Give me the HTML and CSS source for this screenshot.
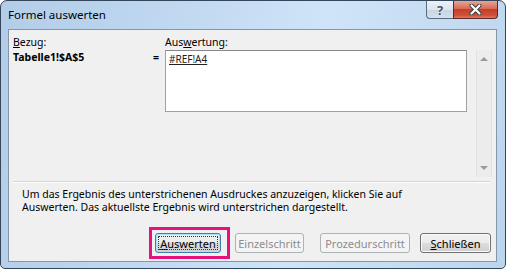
FILE: index.html
```html
<!DOCTYPE html>
<html lang="de">

<head>
    <meta charset="UTF-8">
    <title>Formel auswerten</title>
    <link rel="stylesheet" href="styles.css">
</head>

<body>

    <div class="window">
        <div class="titlebar">
            <span class="title">Formel auswerten</span>
            <div class="caption-buttons">
                <span class="cap-btn help">?</span>
                <span class="cap-btn close">
                    <svg width="13" height="11" viewBox="0 0 13 11">
                        <path d="M2.5 1.5 L10.5 9.5 M10.5 1.5 L2.5 9.5" stroke="#3b3b3b" stroke-width="4" stroke-linecap="round" />
                        <path d="M2.5 1.5 L10.5 9.5 M10.5 1.5 L2.5 9.5" stroke="#ffffff" stroke-width="2.2" stroke-linecap="round" />
                    </svg>
                </span>
            </div>
        </div>

        <div class="client">
            <!-- Bezug und Auswertung -->
            <div class="eval-area">
                <div class="ref-col">
                    <div class="label"><u>B</u>ezug:</div>
                    <div class="ref-value">Tabelle1!$A$5</div>
                </div>
                <div class="eq-col">=</div>
                <div class="result-col">
                    <div class="label">Aus<u>w</u>ertung:</div>
                    <div class="result-box"><u>#REF!A4</u></div>
                </div>
                <div class="scrollbar">
                    <span class="arrow up"></span>
                    <span class="arrow down"></span>
                </div>
            </div>

            <div class="separator"></div>

            <p class="hint">Um das Ergebnis des unterstrichenen Ausdruckes anzuzeigen, klicken Sie auf<br>
                Auswerten. Das aktuellste Ergebnis wird unterstrichen dargestellt.</p>

            <!-- Schaltflächen unten rechts -->
            <div class="buttons">
                <span class="highlight">
                    <button class="btn btn-default"><span class="focus"><u>A</u>uswerten</span></button>
                </span>
                <button class="btn btn-step" disabled>Einzelschritt</button>
                <button class="btn btn-proc" disabled>Prozedurschritt</button>
                <button class="btn btn-close"><u>S</u>chließen</button>
            </div>
        </div>
    </div>

</body>

</html>
```

FILE: styles.css
```css
body {
    margin: 0;
    font-family: "Noto Sans", "Open Sans", sans-serif;
    font-size: 10.5px;
    color: #000;
    background: #fff;
}

.window {
    width: 506px;
    height: 269px;
    box-sizing: border-box;
    display: flex;
    flex-direction: column;
    border: 1px solid #34465a;
    border-radius: 7px 7px 5px 5px;
    background: linear-gradient(100deg, #b3cde8 0%, #c1d9f1 35%, #cfe4f8 60%, #bcd5ee 100%);
    overflow: hidden;
}

.titlebar {
    height: 27px;
    display: flex;
    align-items: flex-start;
}

.title {
    padding: 6px 0 0 7px;
    font-size: 11.5px;
    line-height: 16px;
}

.caption-buttons {
    margin-left: auto;
    margin-right: 7px;
    display: flex;
}

.cap-btn {
    height: 18px;
    box-sizing: border-box;
    display: flex;
    justify-content: center;
    align-items: center;
    border: 1px solid #5b6b7d;
    border-top: none;
}

.cap-btn.help {
    width: 27px;
    border-right: none;
    border-radius: 0 0 0 4px;
    background: linear-gradient(#eaf1f9 0%, #dbe6f1 50%, #c6d4e3 51%, #d3e0ee 100%);
    color: #4a5564;
    font-weight: bold;
    font-size: 13px;
    text-shadow: 0 0 2px #fff;
}

.cap-btn.close {
    width: 45px;
    border-color: #5a2a24;
    border-radius: 0 0 4px 0;
    background: linear-gradient(#e9a496 0%, #d66c58 45%, #c63f2a 50%, #cf5138 85%, #e07e62 100%);
}

.client {
    flex: 1;
    margin: 1px 8px 6px 7px;
    display: flex;
    flex-direction: column;
    border: 1px solid #8596a8;
    background: #f0f0f0;
}

.eval-area {
    height: 151px;
    box-sizing: border-box;
    display: flex;
    padding: 5px 0 0 4px;
}

.label {
    line-height: 15px;
}

.ref-col {
    width: 140px;
}

.ref-value {
    font-weight: bold;
    line-height: 15px;
}

.eq-col {
    width: 12px;
    padding-top: 15px;
    line-height: 15px;
    font-weight: bold;
}

.result-col {
    width: 302px;
}

.result-box {
    height: 62px;
    box-sizing: border-box;
    padding: 1px 3px;
    line-height: 15px;
    background: #fff;
    border: 1px solid #a0a0a0;
    border-top-color: #888;
    font-size: 10px;
    color: #222;
}

.scrollbar {
    width: 16px;
    height: 127px;
    box-sizing: border-box;
    margin: 15px 0 0 9px;
    display: flex;
    flex-direction: column;
    justify-content: space-between;
    align-items: center;
    padding: 7px 0;
    background: #ececec;
    border-left: 1px solid #e2e2e2;
    border-right: 1px solid #e2e2e2;
}

.arrow {
    width: 0;
    height: 0;
    border-left: 4px solid transparent;
    border-right: 4px solid transparent;
}

.arrow.up {
    border-bottom: 4px solid #9a9a9a;
}

.arrow.down {
    border-top: 4px solid #9a9a9a;
}

.separator {
    margin: 0 6px 0 4px;
    border-top: 1px solid #d4d4d4;
    border-bottom: 1px solid #fff;
}

.hint {
    margin: 5px 0 0 0;
    padding-left: 13px;
    line-height: 13px;
}

.buttons {
    margin-top: auto;
    margin-bottom: 2px;
    padding-right: 5px;
    display: flex;
    justify-content: flex-end;
    align-items: center;
}

.highlight {
    display: flex;
    padding: 3px 6px 3px 3px;
    border: 3px solid #e5127d;
}

.btn {
    height: 20px;
    padding: 0;
    box-sizing: border-box;
    font-family: "Noto Sans", "Open Sans", sans-serif;
    font-size: 11px;
    color: #000;
    border: 1px solid #707070;
    border-radius: 3px;
    background: linear-gradient(#f2f2f2 0%, #ebebeb 50%, #dddddd 51%, #cfcfcf 100%);
    box-shadow: inset 0 0 0 1px #fbfbfb;
}

.btn-default {
    width: 66px;
    border-color: #3c7fb1;
    box-shadow: inset 0 0 0 1px #a6e2f8;
    display: flex;
    padding: 2px;
}

.btn-default .focus {
    flex: 1;
    display: flex;
    justify-content: center;
    align-items: center;
    outline: 1px dotted #333;
    outline-offset: -1px;
}

.btn:disabled {
    color: #8d8d8d;
    border-color: #adb2b5;
    background: #f4f4f4;
    box-shadow: none;
}

.btn-step {
    width: 69px;
    margin-left: 5px;
}

.btn-proc {
    width: 90px;
    margin-left: 16px;
}

.btn-close {
    width: 71px;
    margin-left: 10px;
}
```
